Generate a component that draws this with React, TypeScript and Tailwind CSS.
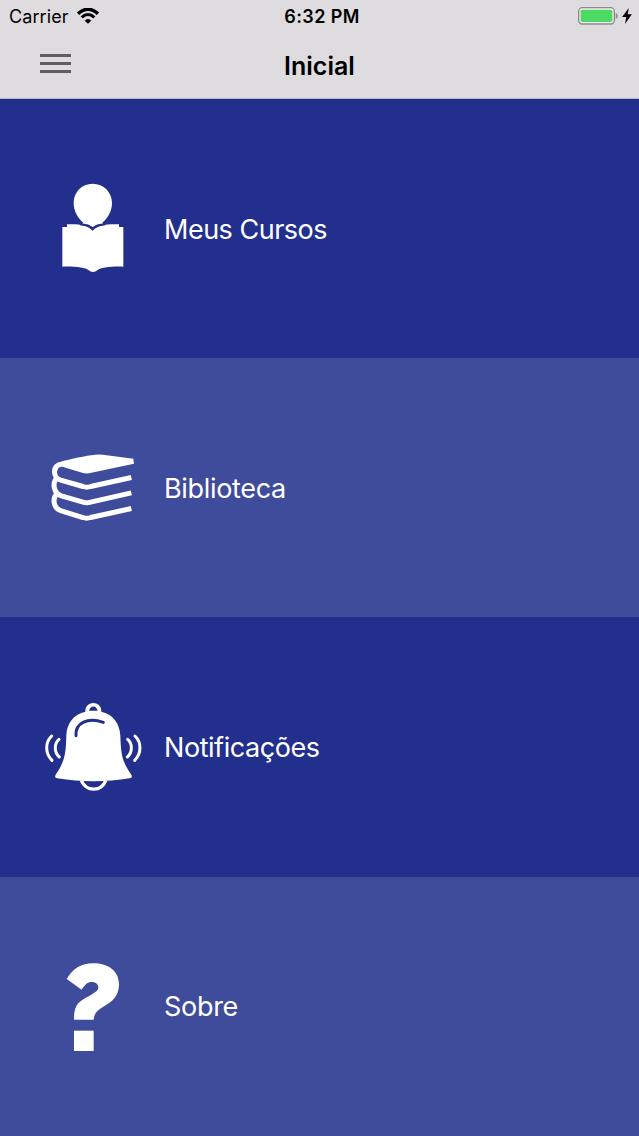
import type { ReactNode } from 'react'

interface MenuItem {
  label: string
  className: string
  labelClassName: string
  icon: ReactNode
}

function CoursesIcon() {
  return (
    <svg viewBox="-15 0 348 348" className="size-[116px]" fill="#fff">
      <path d="M158 41C191 41 216 66 216 99C216 121 205 143 187 158L190 161C174 162 166 165 158 172C150 165 142 162 126 161L130 158C112 143 101 121 101 99C101 66 125 41 158 41Z" />
      <path d="M81 163C112 161 144 165 158 182C172 165 205 161 237 163V171H250V290C211 289 181 293 173 300Q159 312 145 300C137 293 107 289 67 290V171H81Z" />
      <path
        d="M120 163C140 164 150 168 158 177C166 168 176 164 196 163"
        fill="none"
        stroke="#232f8c"
        strokeWidth="6"
      />
    </svg>
  )
}

function LibraryIcon() {
  return (
    <svg viewBox="-15 -31.5 348 348" className="size-[116px]" fill="none">
      <path
        d="M58 65C95 55 137 46 165 43Q181 41 200 44L280 55L282 70L154 97Q139 101 124 96L72 80C60 76 52 82 52 92L46 88C44 76 48 68 58 65Z"
        fill="#fff"
      />
      <g stroke="#fff" strokeWidth="15">
        <path d="M64 71C37 72 37 112 62 119L129 138Q140 142 152 138L274 111" />
        <path d="M51 112C36 128 40 158 64 166L129 185Q140 189 152 185L274 157" />
        <path d="M51 159C36 175 40 204 64 211L129 231Q140 235 152 231L274 204" />
      </g>
    </svg>
  )
}

function BellIcon() {
  return (
    <svg viewBox="0 -3 348 348" className="size-[116px]" fill="none">
      <path
        d="M151 65C149 30 201 30 199 65C233 73 254 98 256 137C258 190 260 214 289 254Q294 263 284 265C213 277 139 277 67 265Q57 263 62 254C89 215 93 190 94 137C95 98 117 73 151 65ZM162 62H188C184 45 166 45 162 62Z"
        fill="#fff"
        fillRule="evenodd"
      />
      <path d="M123 137C120 99 159 80 205 97" stroke="#232f8c" strokeWidth="9" strokeLinecap="round" />
      <path d="M139 272C154 306 199 306 212 272" stroke="#fff" strokeWidth="10" />
      <g stroke="#fff" strokeWidth="9" strokeLinecap="round">
        <path d="M50 138C30 157 30 190 51 211" />
        <path d="M72 148C57 160 57 187 73 201" />
        <path d="M278 148C293 160 293 187 277 201" />
        <path d="M300 138C320 157 320 190 299 211" />
      </g>
    </svg>
  )
}

function AboutIcon() {
  return (
    <svg viewBox="-45 -6 348 348" className="size-[116px]" fill="#fff">
      <path d="M50 87C69 55 95 40 128 40C178 40 208 65 207 105C206 137 190 153 160 170C141 181 133 190 131 209H72C72 174 78 160 106 144C132 129 146 122 145 112C144 101 136 96 124 96C113 96 105 103 95 119Z" />
      <path d="M72 242H131V303H72Z" />
    </svg>
  )
}

const menuItems: MenuItem[] = [
  { label: 'Meus Cursos', className: 'bg-[#232f8c]', labelClassName: 'pt-0.5 tracking-[-0.5px]', icon: <CoursesIcon /> },
  { label: 'Biblioteca', className: 'bg-[#3f4c9b]', labelClassName: 'pt-0.5 tracking-[-0.33px]', icon: <LibraryIcon /> },
  { label: 'Notificações', className: 'bg-[#232f8c]', labelClassName: 'pt-0.5 tracking-[-0.45px]', icon: <BellIcon /> },
  { label: 'Sobre', className: 'bg-[#3f4c9b]', labelClassName: 'tracking-[-0.3px]', icon: <AboutIcon /> },
]

function StatusBar() {
  return (
    <div className="grid h-8 grid-cols-3 items-center pr-[7px] pl-[9px] text-[18px] leading-none">
      <div className="flex items-center gap-2">
        <span className="pt-0.5 tracking-[0.1px]">Carrier</span>
        <svg viewBox="0 0 66 48" className="h-4 w-[22px]" fill="none" stroke="#000">
          <path d="M3 17Q33 -10 63 17" strokeWidth="10" />
          <path d="M14 28Q33 11 52 28" strokeWidth="9" />
          <path d="M23 38Q33 28 43 38L33 47Z" fill="#000" stroke="none" />
        </svg>
      </div>
      <span className="pt-0.5 pl-[3px] text-center font-semibold tracking-[0.4px]">6:32 PM</span>
      <div className="flex items-center justify-end gap-1">
        <svg viewBox="0 0 120 54" className="h-[18px] w-10">
          <rect x="2" y="2" width="107" height="49" rx="11" fill="#f0edf1" stroke="#8c8a8d" strokeWidth="4" />
          <rect x="8" y="8" width="95" height="37" rx="5" fill="#4cd964" />
          <path d="M113 18Q119 20 119 27Q119 34 113 36Z" fill="#8c8a8d" />
        </svg>
        <svg viewBox="0 0 28 46" className="h-4 w-2.5">
          <path d="M19 0L0 26H12L8 46L28 18H16Z" />
        </svg>
      </div>
    </div>
  )
}

export default function App() {
  return (
    <div className="flex h-[1136px] w-[639px] flex-col overflow-hidden bg-[#dedcdf] font-['Inter',sans-serif] text-black">
      <header className="h-[98.5px] shrink-0 border-b border-[#b4b9d0]">
        <StatusBar />
        <div className="grid h-[66px] grid-cols-[1fr_auto_1fr] items-center px-10">
          <button aria-label="Menu" className="mb-[3px] flex w-[31px] flex-col gap-[5px]">
            <span className="h-[3px] bg-[#5f5d60]" />
            <span className="h-[3px] bg-[#5f5d60]" />
            <span className="h-[3px] bg-[#5f5d60]" />
          </button>
          <h1 className="pt-[3px] text-[25px] font-semibold">Inicial</h1>
        </div>
      </header>

      <nav className="grid flex-1 grid-rows-4">
        {menuItems.map((item) => (
          <a key={item.label} className={`flex items-center gap-[13px] pl-[35px] text-white ${item.className}`}>
            {item.icon}
            <span className={`text-[27px] leading-none ${item.labelClassName}`}>{item.label}</span>
          </a>
        ))}
      </nav>
    </div>
  )
}
